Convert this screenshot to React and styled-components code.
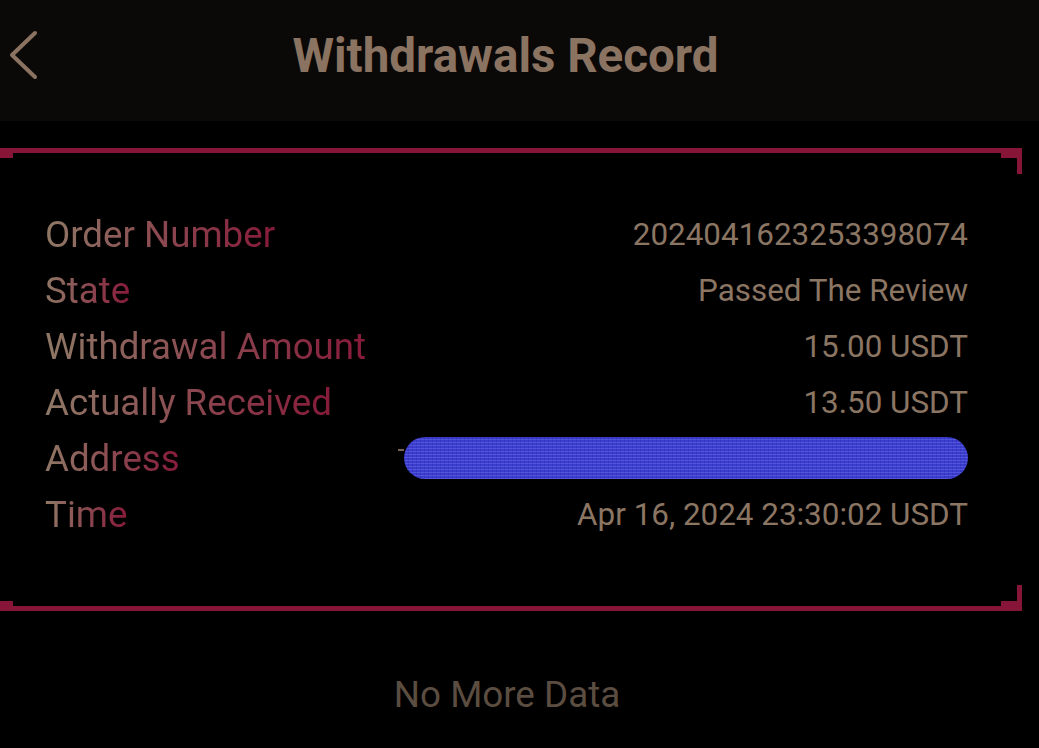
import React from 'react';
import styled, { createGlobalStyle } from 'styled-components';

const Global = createGlobalStyle`
  html, body {
    margin: 0;
    padding: 0;
    background: #000;
  }
  body {
    font-family: Roboto, "Liberation Sans", sans-serif;
  }
`;

const Page = styled.div`
  width: 1039px;
  min-height: 748px;
  background: #000;
  display: flex;
  flex-direction: column;
  overflow: hidden;
`;

const Header = styled.header`
  height: 121px;
  background: #0b0908;
  display: flex;
  align-items: center;
  justify-content: center;
  position: relative;
`;

const BackButton = styled.button`
  position: absolute;
  left: 6px;
  top: 28px;
  width: 36px;
  height: 54px;
  padding: 0;
  border: 0;
  background: none;
  cursor: pointer;
`;

const Title = styled.h1`
  margin: 0 28px 10px 0;
  font-size: 47.5px;
  font-weight: 700;
  color: #8b7361;
`;

const Card = styled.section`
  margin-top: 27px;
  width: 1022px;
  box-sizing: border-box;
  border-top: 5px solid #861537;
  border-bottom: 5px solid #861537;
  padding: 53px 54px 64px 45px;
  position: relative;
  display: flex;
  flex-direction: column;
`;

const Corner = styled.span`
  position: absolute;
  ${p => (p.$top ? 'top: 0;' : 'bottom: 0;')}
  ${p => (p.$right ? 'right: 0;' : 'left: 0;')}
  width: ${p => (p.$right ? 21 : 13)}px;
  height: 5px;
  background: #861537;
  &::after {
    content: '';
    display: ${p => (p.$right ? 'block' : 'none')};
    position: absolute;
    right: 0;
    ${p => (p.$top ? 'top: 0;' : 'bottom: 0;')}
    width: 5px;
    height: 21px;
    background: #861537;
  }
`;

const Row = styled.div`
  height: 56px;
  display: flex;
  align-items: center;
  justify-content: space-between;
`;

const Label = styled.span`
  font-size: 36.7px;
  background: linear-gradient(90deg, #8f7866 0%, #871a3a 100%);
  -webkit-background-clip: text;
  background-clip: text;
  color: transparent;
`;

const Value = styled.span`
  font-size: 31.4px;
  color: #8b7563;
`;

const Redacted = styled.span`
  position: relative;
  width: 564px;
  height: 42px;
  border-radius: 21px;
  background:
    repeating-linear-gradient(0deg, rgba(120, 120, 240, 0.4) 0 1px, transparent 1px 3px),
    repeating-linear-gradient(90deg, rgba(30, 30, 170, 0.3) 0 1px, transparent 1px 4px),
    #3b3dcc;
  &::before {
    content: '';
    position: absolute;
    left: -6px;
    top: 12px;
    width: 6px;
    height: 2px;
    background: #7a6350;
  }
`;

const Footer = styled.div`
  width: 1022px;
  box-sizing: border-box;
  padding-right: 8px;
  margin-top: 62px;
  text-align: center;
  font-size: 36.8px;
  color: #5b4d40;
`;

const rows = [
  ['Order Number', '2024041623253398074'],
  ['State', 'Passed The Review'],
  ['Withdrawal Amount', '15.00 USDT'],
  ['Actually Received', '13.50 USDT'],
  ['Address', null],
  ['Time', 'Apr 16, 2024 23:30:02 USDT'],
];

export default function App() {
  return (
    <Page>
      <Global />
      <Header>
        <BackButton aria-label="back">
          <svg width="36" height="54" viewBox="0 0 36 54">
            <path d="M29 5 L6 27 L29 49" fill="none" stroke="#8b7361" strokeWidth="4" strokeLinecap="round" strokeLinejoin="round" />
          </svg>
        </BackButton>
        <Title>Withdrawals Record</Title>
      </Header>
      <Card>
        <Corner $top />
        <Corner $top $right />
        <Corner />
        <Corner $right />
        {rows.map(([label, value]) => (
          <Row key={label}>
            <Label>{label}</Label>
            {value ? <Value>{value}</Value> : <Redacted />}
          </Row>
        ))}
      </Card>
      <Footer>No More Data</Footer>
    </Page>
  );
}
